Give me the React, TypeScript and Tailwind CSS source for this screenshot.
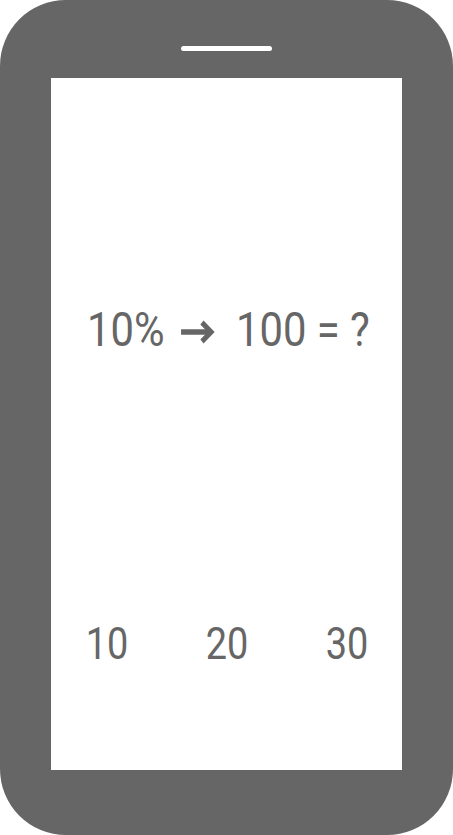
import React from 'react';

const choices = [10, 20, 30];

const Arrow: React.FC = () => (
    <svg viewBox="0 0 40 24" className="w-[40px] h-[24px] inline-block" fill="none" stroke="currentColor" strokeWidth={5.5}>
        <path d="M1 12H35" />
        <path d="M25 2.5L35.5 12L25 21.5" strokeLinejoin="miter" />
    </svg>
);

const App: React.FC = () => {
    return (
        <div className="w-[453px] h-[835px] bg-white" style={{ fontFamily: 'Roboto, "Liberation Sans", sans-serif' }}>
            <div className="w-[453px] h-[835px] bg-[#666666] rounded-[66px] flex flex-col items-center px-[51px] pb-[65px]">
                {/* speaker */}
                <div className="h-[78px] w-full flex items-start justify-center pt-[46px]">
                    <div className="w-[91px] h-[5px] rounded-full bg-white" />
                </div>
                <div className="flex-1 w-full bg-white flex flex-col text-[#666666]">
                    <div className="h-[504px] flex items-center justify-center pl-[4px]">
                        <div className="flex items-center scale-x-[0.87] text-[48px] leading-none whitespace-nowrap">
                            <span>10%</span>
                            <span className="ml-[18px] mr-[24px] mt-[4px] flex"><Arrow /></span>
                            <span>100 = ?</span>
                        </div>
                    </div>
                    <div className="mt-[40px] grid grid-cols-[120px_120px_120px] justify-center">
                        {choices.map((n) => (
                            <div key={n} className="text-center text-[44px] leading-none scale-x-[0.86]">
                                {n}
                            </div>
                        ))}
                    </div>
                </div>
            </div>
        </div>
    );
};

export default App;
